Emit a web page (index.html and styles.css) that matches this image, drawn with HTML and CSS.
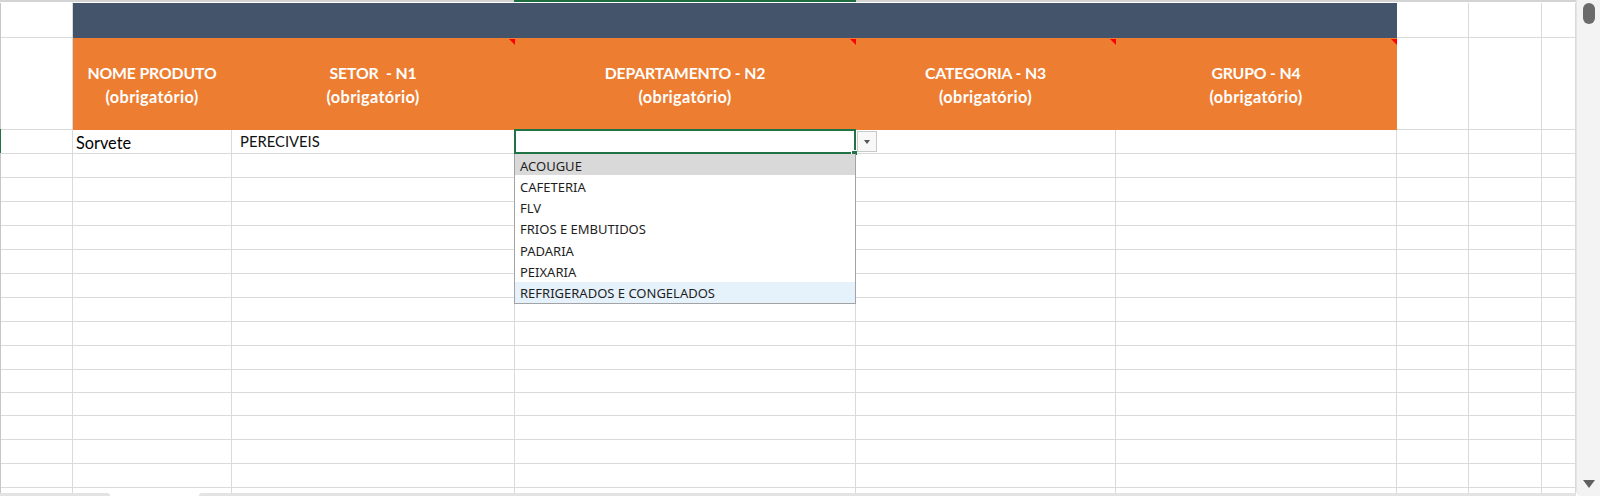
FILE: index.html
```html
<!DOCTYPE html>
<html lang="pt-BR">
<head>
<meta charset="utf-8">
<title>Planilha de produtos</title>
<link rel="stylesheet" href="styles.css">
</head>
<body>
<div class="app">
  <div class="main">
    <div class="colhead">
      <div class="ch-seg ch-left"></div>
      <div class="ch-seg ch-sel"></div>
      <div class="ch-seg ch-right"></div>
    </div>
    <div class="frame">
      <div class="gutter"><div class="gutter-sel"></div></div>
      <div class="sheet">
        <div class="c"></div><div class="c band"></div><div class="c"></div><div class="c"></div><div class="c"></div>

        <div class="c"></div>
        <div class="c hd"><span>NOME PRODUTO<br><span class="req">(obrigatório)</span></span></div>
        <div class="c hd note"><span>SETOR&nbsp; - N1<br><span class="req">(obrigatório)</span></span></div>
        <div class="c hd note"><span>DEPARTAMENTO - N2<br><span class="req">(obrigatório)</span></span></div>
        <div class="c hd note"><span>CATEGORIA - N3<br><span class="req">(obrigatório)</span></span></div>
        <div class="c hd note"><span>GRUPO - N4<br><span class="req">(obrigatório)</span></span></div>
        <div class="c"></div><div class="c"></div><div class="c"></div>

        <div class="c"></div><div class="c txt">Sorvete</div><div class="c txt txt-list">PERECIVEIS</div><div class="c"></div><div class="c"></div><div class="c"></div><div class="c"></div><div class="c"></div><div class="c"></div>

        <div class="c"></div><div class="c"></div><div class="c"></div><div class="c"></div><div class="c"></div><div class="c"></div><div class="c"></div><div class="c"></div><div class="c"></div>
        <div class="c"></div><div class="c"></div><div class="c"></div><div class="c"></div><div class="c"></div><div class="c"></div><div class="c"></div><div class="c"></div><div class="c"></div>
        <div class="c"></div><div class="c"></div><div class="c"></div><div class="c"></div><div class="c"></div><div class="c"></div><div class="c"></div><div class="c"></div><div class="c"></div>
        <div class="c"></div><div class="c"></div><div class="c"></div><div class="c"></div><div class="c"></div><div class="c"></div><div class="c"></div><div class="c"></div><div class="c"></div>
        <div class="c"></div><div class="c"></div><div class="c"></div><div class="c"></div><div class="c"></div><div class="c"></div><div class="c"></div><div class="c"></div><div class="c"></div>
        <div class="c"></div><div class="c"></div><div class="c"></div><div class="c"></div><div class="c"></div><div class="c"></div><div class="c"></div><div class="c"></div><div class="c"></div>
        <div class="c"></div><div class="c"></div><div class="c"></div><div class="c"></div><div class="c"></div><div class="c"></div><div class="c"></div><div class="c"></div><div class="c"></div>
        <div class="c"></div><div class="c"></div><div class="c"></div><div class="c"></div><div class="c"></div><div class="c"></div><div class="c"></div><div class="c"></div><div class="c"></div>
        <div class="c"></div><div class="c"></div><div class="c"></div><div class="c"></div><div class="c"></div><div class="c"></div><div class="c"></div><div class="c"></div><div class="c"></div>
        <div class="c"></div><div class="c"></div><div class="c"></div><div class="c"></div><div class="c"></div><div class="c"></div><div class="c"></div><div class="c"></div><div class="c"></div>
        <div class="c"></div><div class="c"></div><div class="c"></div><div class="c"></div><div class="c"></div><div class="c"></div><div class="c"></div><div class="c"></div><div class="c"></div>
        <div class="c"></div><div class="c"></div><div class="c"></div><div class="c"></div><div class="c"></div><div class="c"></div><div class="c"></div><div class="c"></div><div class="c"></div>
        <div class="c"></div><div class="c"></div><div class="c"></div><div class="c"></div><div class="c"></div><div class="c"></div><div class="c"></div><div class="c"></div><div class="c"></div>
        <div class="c"></div><div class="c"></div><div class="c"></div><div class="c"></div><div class="c"></div><div class="c"></div><div class="c"></div><div class="c"></div><div class="c"></div>
        <div class="c"></div><div class="c"></div><div class="c"></div><div class="c"></div><div class="c"></div><div class="c"></div><div class="c"></div><div class="c"></div><div class="c"></div>

        <div class="selection"><div class="handle"></div></div>
        <div class="dd-btn"></div>
        <div class="dd-list">
          <div class="dd-item cur">ACOUGUE</div>
          <div class="dd-item">CAFETERIA</div>
          <div class="dd-item">FLV</div>
          <div class="dd-item">FRIOS E EMBUTIDOS</div>
          <div class="dd-item">PADARIA</div>
          <div class="dd-item">PEIXARIA</div>
          <div class="dd-item hover">REFRIGERADOS E CONGELADOS</div>
        </div>
      </div>
    </div>
    <div class="hbar">
      <div class="hb-a"></div>
      <div class="hb-gap"></div>
      <div class="hb-b"></div>
    </div>
  </div>
  <div class="vscroll">
    <div class="thumb"></div>
    <div class="arrow-down"></div>
  </div>
</div>
</body>
</html>
```

FILE: styles.css
```css
* { box-sizing: border-box; }
html, body { margin: 0; padding: 0; background: #fff; }
body {
  width: 1600px;
  height: 496px;
  overflow: hidden;
  font-family: Lato, "Liberation Sans", sans-serif;
}
.app { display: flex; width: 1600px; height: 496px; }
.main { width: 1576px; flex: none; display: flex; flex-direction: column; }

.colhead { height: 3px; display: flex; flex: none; }
.ch-seg { border-top: 2px solid #d4d4d4; }
.ch-left { width: 514px; }
.ch-sel { width: 342px; border-top-color: #1e6e41; }
.ch-right { flex: 1; }

.frame { display: flex; height: 490px; flex: none; overflow: hidden; }
.gutter { width: 1px; flex: none; background: #c6c6c6; }
.gutter-sel { margin-top: 126px; height: 24px; background: #217346; }

.sheet {
  position: relative;
  display: grid;
  grid-template-columns: 72px 159px 283px 341px 260px 281px 72px 73px 34px;
  grid-template-rows: 35px 92px 24px repeat(9, 24px) 23px 23px repeat(3, 24px) 8px;
}
.c {
  border-right: 1px solid #dadada;
  border-bottom: 1px solid #dadada;
  min-width: 0;
}
.band {
  grid-column: 2 / 7;
  background: #44546a;
  border-color: #44546a;
}
.hd {
  position: relative;
  background: #ed7d31;
  border-color: #ed7d31;
  color: #fff;
  font-weight: 700;
  font-size: 15.8px;
  letter-spacing: -0.15px;
  line-height: 23.4px;
  text-align: center;
  display: flex;
  align-items: center;
  justify-content: center;
  padding-top: 2px;
  white-space: nowrap;
}
.req {
  font-size: 16.3px;
  letter-spacing: 0.35px;
}
.note::after {
  content: "";
  position: absolute;
  top: 1px;
  right: -1px;
  border-top: 6px solid #ff0000;
  border-left: 6px solid transparent;
}
.txt {
  display: flex;
  align-items: flex-end;
  font-size: 16.3px;
  line-height: 20px;
  color: #000;
  padding-left: 3px;
  white-space: nowrap;
}
.txt-list {
  font-size: 14.8px;
  padding-left: 8px;
  padding-bottom: 2px;
  color: #111;
}

.selection {
  position: absolute;
  left: 513px;
  top: 126px;
  width: 342px;
  height: 25px;
  border: 2px solid #217346;
}
.handle {
  position: absolute;
  right: -3px;
  bottom: -3px;
  width: 6px;
  height: 5px;
  background: #217346;
  border-left: 1px solid #fff;
  border-top: 1px solid #fff;
}
.dd-btn {
  position: absolute;
  left: 856px;
  top: 128px;
  width: 20px;
  height: 21px;
  background: #f8f8f8;
  border: 1px solid #c9c9c9;
  display: flex;
  align-items: center;
  justify-content: center;
}
.dd-btn::after {
  content: "";
  border-top: 4px solid #555;
  border-left: 3.5px solid transparent;
  border-right: 3.5px solid transparent;
}
.dd-list {
  position: absolute;
  left: 513px;
  top: 151px;
  width: 342px;
  height: 150px;
  background: #fff;
  border: 1px solid #a3a3a3;
  border-top: none;
  display: flex;
  flex-direction: column;
  font-family: "Noto Sans", "Open Sans", sans-serif;
  font-size: 13px;
  color: #1e1e1e;
}
.dd-item {
  flex: 1;
  display: flex;
  align-items: center;
  padding: 2px 0 0 5px;
  white-space: nowrap;
}
.dd-item.cur { background: #d9d9d9; }
.dd-item.hover { background: #e5f1fb; }

.hbar { height: 3px; flex: none; display: flex; }
.hb-a { width: 110px; background: #e3e3e3; border-top-right-radius: 3px; }
.hb-gap { width: 89px; }
.hb-b { flex: 1; background: #e3e3e3; border-top-left-radius: 3px; }

.vscroll {
  width: 24px;
  flex: none;
  background: #f3f3f3;
  border-left: 1px solid #e4e4e4;
  border-bottom-left-radius: 6px;
  display: flex;
  flex-direction: column;
  align-items: flex-start;
}
.thumb {
  margin: 3px 0 0 6px;
  width: 12px;
  height: 21px;
  border-radius: 6px;
  background: #6b6b6b;
}
.arrow-down {
  margin: auto 0 8px 6px;
  border-top: 8px solid #606060;
  border-left: 6px solid transparent;
  border-right: 6px solid transparent;
}
```
